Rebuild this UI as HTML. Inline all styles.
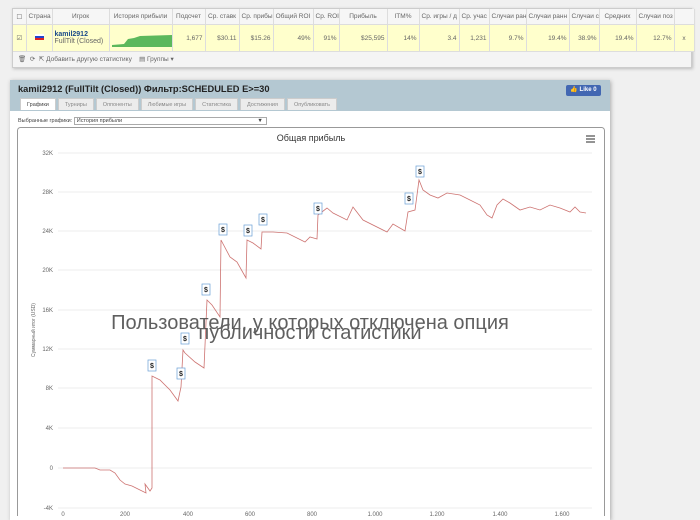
<!DOCTYPE html>
<html><head><meta charset="utf-8"><style>
body{margin:0;width:700px;height:516px;background:#f0f0f0;font-family:"Liberation Sans",sans-serif;overflow:hidden;position:relative}
.tb{position:absolute;left:12px;top:8px;width:678px;height:58px;background:#f4f4f4;border:1px solid #ccc;box-shadow:1px 1px 3px #bbb}
table{border-collapse:collapse;font-size:6.5px;color:#666;table-layout:fixed;width:678px}
td{border-right:1px solid #ddd;padding:0 2px;white-space:nowrap;overflow:hidden}
tr.h td{height:15px;text-align:center;background:#f6f6f6;border-bottom:1px solid #ddd}
tr.d td{height:26px;background:#ffffcc;text-align:right;border-bottom:1px solid #ddd}
.ft{font-size:6.5px;color:#666;padding:3px 0 0 5px}
.panel{position:absolute;left:10px;top:80px;width:600px;height:440px;background:#fff;box-shadow:1px 1px 4px #aaa}
.ph{height:31px;background:#b4c8d2;position:relative}
.ttl{position:absolute;left:8px;top:4px;font-size:9.3px;font-weight:bold;color:#222}
.tabs{position:absolute;left:10px;top:18px;font-size:5.5px;color:#888}
.tabs span{display:inline-block;background:#ececec;border:1px solid #ccc;border-bottom:none;padding:3px 6px 2px;margin-right:2px}
.tabs span.a{background:#fff;color:#444}
.like{position:absolute;left:556px;top:5px;width:35px;height:11px;background:#4267b2;border-radius:2px;color:#fff;font-size:6px;font-weight:bold;line-height:11px;text-align:center}
</style></head><body>
<div class="tb">
<table>
<colgroup><col style="width:13px"><col style="width:26px"><col style="width:57px"><col style="width:63px"><col style="width:33px"><col style="width:34px"><col style="width:34px"><col style="width:40px"><col style="width:26px"><col style="width:48px"><col style="width:32px"><col style="width:40px"><col style="width:30px"><col style="width:37px"><col style="width:43px"><col style="width:30px"><col style="width:37px"><col style="width:38px"><col style="width:20px"></colgroup>
<tr class="h"><td>☐</td><td>Страна</td><td>Игрок</td><td>История прибыли</td><td>Подсчет</td><td>Ср. ставк</td><td>Ср. прибы</td><td>Общий ROI</td><td>Ср. ROI</td><td>Прибыль</td><td>ITM%</td><td>Ср. игры / д</td><td>Ср. учас</td><td>Случаи ран</td><td>Случаи ранн</td><td>Случаи ср</td><td>Средних</td><td>Случаи поз</td><td></td></tr>
<tr class="d"><td style="text-align:center">☑</td><td style="text-align:center"><span style="display:inline-block;width:9px;height:6px;background:linear-gradient(#fff 33%,#2244cc 33%,#2244cc 66%,#dd2222 66%)"></span></td><td style="text-align:left;font-size:7px"><b style="color:#1a4a8a">kamil2912</b><br>FullTilt (Closed)</td><td><svg width="60" height="20"><path d="M0 18 L12 17 L16 12 L22 11 L28 9 L60 8 L60 20 L0 20Z" fill="#5cb85c"/></svg></td><td>1,677</td><td>$30.11</td><td>$15.26</td><td>49%</td><td>91%</td><td>$25,595</td><td>14%</td><td>3.4</td><td>1,231</td><td>9.7%</td><td>19.4%</td><td>38.9%</td><td>19.4%</td><td>12.7%</td><td style="text-align:center">x</td></tr>
</table>
<div class="ft">🗑 &nbsp;⟳ &nbsp;⇱ Добавить другую статистику &nbsp;&nbsp; ▤ Группы ▾</div>
</div>
<div style="position:absolute;left:601px;top:79px;font-size:8px;font-weight:bold">×</div>
<div class="panel">
<div class="ph"><div class="ttl">kamil2912 (FullTilt (Closed)) Фильтр:SCHEDULED E&gt;=30</div>
<div class="tabs"><span class="a">Графики</span><span>Турниры</span><span>Оппоненты</span><span>Любимые игры</span><span>Статистика</span><span>Достижения</span><span>Опубликовать</span></div>
<div class="like">👍 Like 0</div></div>
<div style="position:absolute;left:8px;top:37px;font-size:5.5px;color:#444">Выбранные графики: <span style="display:inline-block;width:187px;border:1px solid #aaa;padding:0 2px;position:relative">История прибыли<span style="position:absolute;right:3px">▼</span></span></div>
</div>
<svg style="position:absolute;left:0;top:0" width="700" height="516">
<rect x="17.5" y="127.5" width="587" height="400" rx="3" fill="#fff" stroke="#999"/>
<text x="311" y="141" font-size="9" fill="#333" text-anchor="middle" font-family="Liberation Sans">Общая прибыль</text>
<path d="M586 136h9M586 139h9M586 142h9" stroke="#555" stroke-width="1.3"/>
<g stroke="#e6e6e6" stroke-width="0.7">
<line x1="58" x2="592" y1="153" y2="153"/><line x1="58" x2="592" y1="192" y2="192"/><line x1="58" x2="592" y1="231" y2="231"/><line x1="58" x2="592" y1="270" y2="270"/><line x1="58" x2="592" y1="310" y2="310"/><line x1="58" x2="592" y1="349" y2="349"/><line x1="58" x2="592" y1="388" y2="388"/><line x1="58" x2="592" y1="428" y2="428"/><line x1="58" x2="592" y1="468" y2="468"/><line x1="58" x2="592" y1="508" y2="508"/></g>
<g font-size="6" fill="#666" text-anchor="end" font-family="Liberation Sans">
<text x="53" y="155">32K</text><text x="53" y="194">28K</text><text x="53" y="233">24K</text><text x="53" y="272">20K</text><text x="53" y="312">16K</text><text x="53" y="351">12K</text><text x="53" y="390">8K</text><text x="53" y="430">4K</text><text x="53" y="470">0</text><text x="53" y="510">-4K</text></g>
<g font-size="6" fill="#666" text-anchor="middle" font-family="Liberation Sans">
<text x="63" y="516">0</text><text x="125" y="516">200</text><text x="188" y="516">400</text><text x="250" y="516">600</text><text x="312" y="516">800</text><text x="375" y="516">1,000</text><text x="437" y="516">1,200</text><text x="500" y="516">1,400</text><text x="562" y="516">1,600</text></g>
<text x="35" y="330" font-size="5" fill="#666" transform="rotate(-90 35 330)" text-anchor="middle" font-family="Liberation Sans">Суммарный итог (USD)</text>
<path fill="none" stroke="#c0504d" stroke-width="0.8" opacity="0.8" d="M63 468 L95 468 L100 470 L110 470 L115 473 L120 480 L125 484 L132 486 L140 490 L146 493 L145 484 L150 491 L152 488 L152 376 L160 380 L170 390 L178 401 L181 387 L183 350 L185 353 L195 362 L204 368 L207 300 L212 305 L220 317 L221 240 L230 257 L237 262 L246 278 L247 240 L253 243 L261 249 L262 232 L273 232 L287 233 L305 242 L310 237 L317 239 L318 215 L327 208 L333 213 L347 220 L353 207 L363 220 L387 232 L393 224 L405 231 L408 212 L415 210 L419 180 L423 190 L430 195 L438 198 L447 193 L460 195 L470 200 L480 205 L487 215 L492 218 L497 205 L503 199 L510 203 L520 210 L530 207 L540 210 L550 205 L560 208 L570 212 L575 207 L580 212 L586 213"/>
<g font-size="7" font-weight="bold" fill="#222" text-anchor="middle" font-family="Liberation Sans">
<g><rect x="148" y="360" width="8" height="11" fill="#fff" stroke="#6a9fd6" stroke-width="0.7"/><text x="152" y="368">$</text></g>
<g><rect x="177" y="368" width="8" height="11" fill="#fff" stroke="#6a9fd6" stroke-width="0.7"/><text x="181" y="376">$</text></g>
<g><rect x="181" y="333" width="8" height="11" fill="#fff" stroke="#6a9fd6" stroke-width="0.7"/><text x="185" y="341">$</text></g>
<g><rect x="202" y="284" width="8" height="11" fill="#fff" stroke="#6a9fd6" stroke-width="0.7"/><text x="206" y="292">$</text></g>
<g><rect x="219" y="224" width="8" height="11" fill="#fff" stroke="#6a9fd6" stroke-width="0.7"/><text x="223" y="232">$</text></g>
<g><rect x="244" y="225" width="8" height="11" fill="#fff" stroke="#6a9fd6" stroke-width="0.7"/><text x="248" y="233">$</text></g>
<g><rect x="259" y="214" width="8" height="11" fill="#fff" stroke="#6a9fd6" stroke-width="0.7"/><text x="263" y="222">$</text></g>
<g><rect x="314" y="203" width="8" height="11" fill="#fff" stroke="#6a9fd6" stroke-width="0.7"/><text x="318" y="211">$</text></g>
<g><rect x="405" y="193" width="8" height="11" fill="#fff" stroke="#6a9fd6" stroke-width="0.7"/><text x="409" y="201">$</text></g>
<g><rect x="416" y="166" width="8" height="11" fill="#fff" stroke="#6a9fd6" stroke-width="0.7"/><text x="420" y="174">$</text></g>
</g>
<g font-size="20" fill="#444" opacity="0.85" text-anchor="middle" font-family="Liberation Sans">
<text x="310" y="329">Пользователи, у которых отключена опция</text>
<text x="310" y="339">публичности статистики</text></g>
</svg>
</body></html>
